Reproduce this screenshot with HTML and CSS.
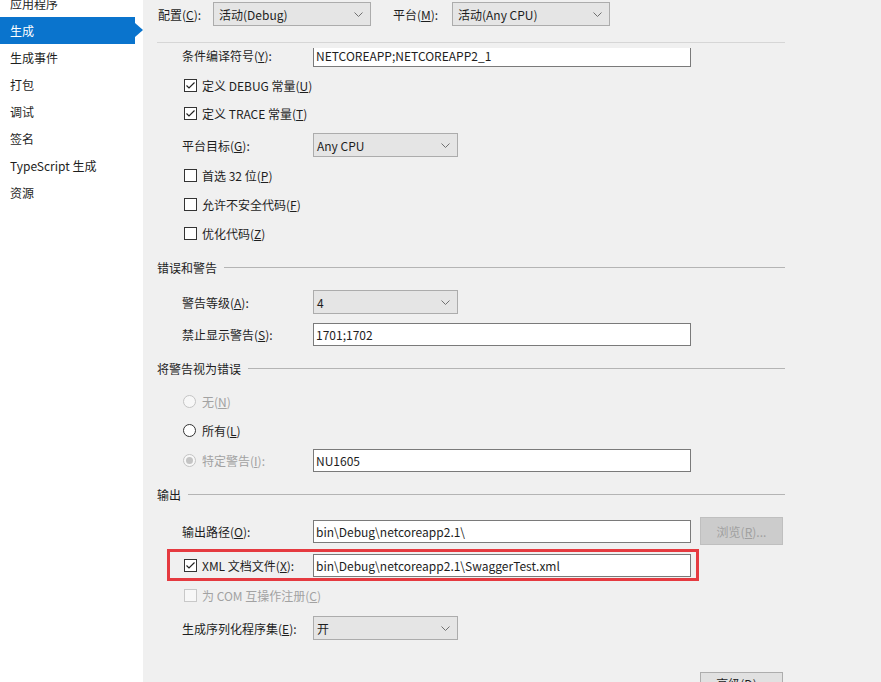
FILE: index.html
```html
<!DOCTYPE html>
<html lang="zh-CN">

<head>
    <meta charset="UTF-8">
    <meta name="viewport" content="width=device-width, initial-scale=1.0">
    <title>生成</title>
    <link rel="stylesheet" href="styles.css">
</head>

<body>
    <div class="page">
        <!-- 左侧页签 -->
        <nav class="sidebar">
            <ul>
                <li>应用程序</li>
                <li class="act">生成</li>
                <li>生成事件</li>
                <li>打包</li>
                <li>调试</li>
                <li>签名</li>
                <li>TypeScript 生成</li>
                <li>资源</li>
            </ul>
        </nav>

        <main class="panel">
            <div class="toolbar">
                <span class="tb-label">配置(<u>C</u>):</span>
                <div class="select tb-select"><span>活动(Debug)</span><svg width="9" height="5" viewBox="0 0 9 5"><path d="M0.5 0.5 L4.5 4.5 L8.5 0.5" fill="none" stroke="#707070" stroke-width="1"/></svg></div>
                <span class="tb-label tb-gap">平台(<u>M</u>):</span>
                <div class="select tb-select"><span>活动(Any CPU)</span><svg width="9" height="5" viewBox="0 0 9 5"><path d="M0.5 0.5 L4.5 4.5 L8.5 0.5" fill="none" stroke="#707070" stroke-width="1"/></svg></div>
            </div>
            <div class="toolbar-rule"></div>

            <div class="scroll">
                <div class="content">
                    <div class="row first">
                        <span class="label">条件编译符号(<u>Y</u>):</span>
                        <div class="input">NETCOREAPP;NETCOREAPP2_1</div>
                    </div>
                    <div class="row">
                        <span class="check on"><svg width="11" height="11" viewBox="0 0 11 11"><path d="M1.5 5.5 L4 8 L9.5 2.5" fill="none" stroke="#222" stroke-width="1.2"/></svg></span>
                        <span>定义 DEBUG 常量(<u>U</u>)</span>
                    </div>
                    <div class="row sp4">
                        <span class="check on"><svg width="11" height="11" viewBox="0 0 11 11"><path d="M1.5 5.5 L4 8 L9.5 2.5" fill="none" stroke="#222" stroke-width="1.2"/></svg></span>
                        <span>定义 TRACE 常量(<u>T</u>)</span>
                    </div>
                    <div class="row sp8">
                        <span class="label">平台目标(<u>G</u>):</span>
                        <div class="select"><span>Any CPU</span><svg width="9" height="5" viewBox="0 0 9 5"><path d="M0.5 0.5 L4.5 4.5 L8.5 0.5" fill="none" stroke="#707070" stroke-width="1"/></svg></div>
                    </div>
                    <div class="row">
                        <span class="check"></span>
                        <span>首选 32 位(<u>P</u>)</span>
                    </div>
                    <div class="row sp5">
                        <span class="check"></span>
                        <span>允许不安全代码(<u>F</u>)</span>
                    </div>
                    <div class="row sp5">
                        <span class="check"></span>
                        <span>优化代码(<u>Z</u>)</span>
                    </div>

                    <div class="group-head">错误和警告</div>
                    <div class="row sp11">
                        <span class="label">警告等级(<u>A</u>):</span>
                        <div class="select"><span>4</span><svg width="9" height="5" viewBox="0 0 9 5"><path d="M0.5 0.5 L4.5 4.5 L8.5 0.5" fill="none" stroke="#707070" stroke-width="1"/></svg></div>
                    </div>
                    <div class="row sp8">
                        <span class="label">禁止显示警告(<u>S</u>):</span>
                        <div class="input">1701;1702</div>
                    </div>

                    <div class="group-head">将警告视为错误</div>
                    <div class="row sp9 disabled">
                        <span class="radio"></span>
                        <span>无(<u>N</u>)</span>
                    </div>
                    <div class="row sp5">
                        <span class="radio"></span>
                        <span>所有(<u>L</u>)</span>
                    </div>
                    <div class="row disabled">
                        <span class="label radio-label"><span class="radio on"></span>特定警告(<u>I</u>):</span>
                        <div class="input">NU1605</div>
                    </div>

                    <div class="group-head sp9">输出</div>
                    <div class="row tall sp11">
                        <span class="label">输出路径(<u>O</u>):</span>
                        <div class="input">bin\Debug\netcoreapp2.1\</div>
                        <button class="btn" disabled>浏览(<u>R</u>)...</button>
                    </div>
                    <div class="row mark">
                        <span class="label radio-label"><span class="check on"><svg width="11" height="11" viewBox="0 0 11 11"><path d="M1.5 5.5 L4 8 L9.5 2.5" fill="none" stroke="#222" stroke-width="1.2"/></svg></span>XML 文档文件(<u>X</u>):</span>
                        <div class="input">bin\Debug\netcoreapp2.1\SwaggerTest.xml</div>
                    </div>
                    <div class="row sp2 disabled">
                        <span class="check"></span>
                        <span>为 COM 互操作注册(<u>C</u>)</span>
                    </div>
                    <div class="row sp9">
                        <span class="label">生成序列化程序集(<u>E</u>):</span>
                        <div class="select"><span>开</span><svg width="9" height="5" viewBox="0 0 9 5"><path d="M0.5 0.5 L4.5 4.5 L8.5 0.5" fill="none" stroke="#707070" stroke-width="1"/></svg></div>
                    </div>
                    <div class="actions">
                        <button class="btn">高级(<u>D</u>)...</button>
                    </div>
                </div>
            </div>
        </main>
    </div>
</body>

</html>
```

FILE: styles.css
```css
body {
    margin: 0;
    font-family: "Noto Sans CJK SC", "Microsoft YaHei", sans-serif;
    font-size: 12px;
    color: #1e1e1e;
    overflow: hidden;
}

u {
    text-decoration: underline;
    text-underline-offset: 1px;
}

.page {
    display: flex;
    height: 682px;
    overflow: hidden;
}

/* 左侧页签 */
.sidebar {
    width: 143px;
    flex-shrink: 0;
    background-color: #fff;
}

.sidebar ul {
    list-style: none;
    margin: -10px 0 0;
    padding: 0;
}

.sidebar li {
    height: 27px;
    line-height: 27px;
    padding-left: 10px;
    width: 125px;
    position: relative;
    white-space: nowrap;
}

.sidebar li.act {
    background-color: #0a74cd;
    color: #fff;
}

.sidebar li.act::after {
    content: "";
    position: absolute;
    right: -8px;
    top: 6px;
    border-left: 8px solid #0a74cd;
    border-top: 7px solid transparent;
    border-bottom: 7px solid transparent;
}

/* 右侧面板 */
.panel {
    flex: 1;
    background-color: #f0f0f0;
    display: flex;
    flex-direction: column;
    min-width: 0;
}

.toolbar {
    display: flex;
    align-items: center;
    height: 24px;
    padding: 2px 0 0 15px;
}

.tb-label {
    width: 55px;
}

.tb-gap {
    margin-left: 22px;
    width: 59px;
}

.toolbar-rule {
    margin: 16px 0 0 14px;
    width: 628px;
    height: 1px;
    background-color: #d6d6d6;
}

.scroll {
    flex: 1;
    overflow: hidden;
    margin-top: 5px;
}

.content {
    margin: -5px 0 0 14px;
    width: 628px;
}

.row {
    display: flex;
    align-items: center;
    height: 24px;
    padding-left: 25px;
    margin-top: 6px;
}

.row.first { margin-top: 0; }
.row.sp2 { margin-top: 2px; }
.row.sp4 { margin-top: 4px; }
.row.sp5 { margin-top: 5px; }
.row.sp8 { margin-top: 8px; }
.row.sp9 { margin-top: 9px; }
.row.sp11 { margin-top: 11px; }

.row.tall {
    height: 28px;
}

.row.disabled {
    color: #a2a2a2;
}

.label {
    width: 131px;
    flex-shrink: 0;
    white-space: nowrap;
}

.radio-label {
    display: flex;
    align-items: center;
}

.input {
    width: 378px;
    height: 23px;
    box-sizing: border-box;
    border: 1px solid #7a7a7a;
    background-color: #fff;
    color: #1e1e1e;
    padding-left: 2px;
    line-height: 21px;
    white-space: nowrap;
}

.select {
    width: 145px;
    height: 24px;
    box-sizing: border-box;
    border: 1px solid #acacac;
    background-color: #e5e5e5;
    display: flex;
    align-items: center;
    justify-content: space-between;
    padding: 0 7px 0 3px;
}

.tb-select {
    width: 158px;
    padding-left: 5px;
}

.check {
    width: 13px;
    height: 13px;
    box-sizing: border-box;
    border: 1px solid #333;
    background-color: #fff;
    margin: 0 5px 0 2px;
    display: flex;
    align-items: center;
    justify-content: center;
    flex-shrink: 0;
}

.disabled .check {
    border-color: #c8c8c8;
    background-color: #f7f7f7;
}

.radio {
    width: 13px;
    height: 13px;
    box-sizing: border-box;
    border: 1px solid #333;
    border-radius: 50%;
    background-color: #fff;
    margin: 0 6px 0 1px;
    display: flex;
    align-items: center;
    justify-content: center;
    flex-shrink: 0;
}

.disabled .radio {
    border-color: #c4c4c4;
    background-color: #f7f7f7;
}

.radio.on::after {
    content: "";
    width: 7px;
    height: 7px;
    border-radius: 50%;
    background-color: #c4c4c4;
}

/* 分组标题 */
.group-head {
    display: flex;
    align-items: center;
    height: 24px;
    margin-top: 10px;
    white-space: nowrap;
}

.group-head::after {
    content: "";
    flex: 1;
    height: 1px;
    margin-left: 7px;
    background-color: #b4b4b4;
}

/* 红框标注 */
.row.mark {
    height: 32px;
    margin: 4px 0 0 10px;
    width: 532px;
    box-sizing: border-box;
    border: 3px solid #e53a40;
    padding-left: 12px;
}

.btn {
    width: 83px;
    height: 28px;
    margin-left: 9px;
    border: 1px solid #adadad;
    background-color: #e1e1e1;
    font-family: inherit;
    font-size: 12px;
    color: #1e1e1e;
    padding: 0;
}

.btn:disabled {
    background-color: #cccccc;
    border-color: #bfbfbf;
    color: #a0a0a0;
}

.actions {
    display: flex;
    justify-content: flex-end;
    margin-top: 32px;
    padding-right: 2px;
}

.actions .btn {
    height: 23px;
}
```
